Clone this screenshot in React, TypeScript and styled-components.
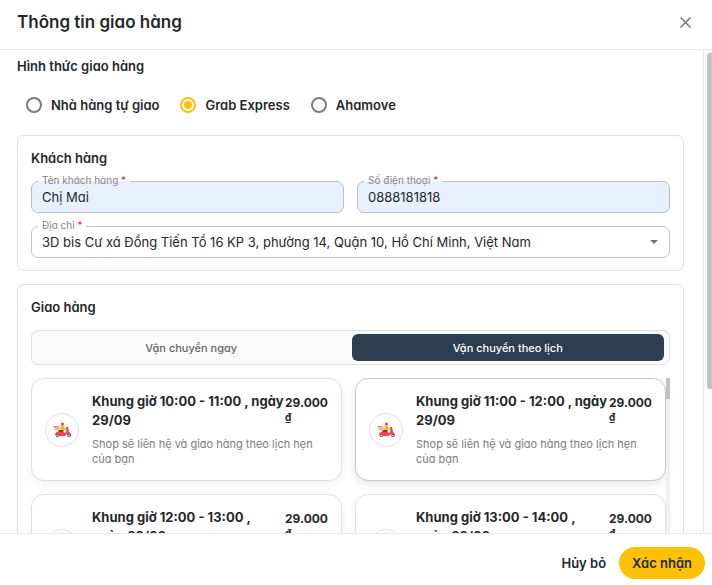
import React, { useState } from "react";
import styled, { createGlobalStyle } from "styled-components";

const GlobalStyle = createGlobalStyle`
  * { box-sizing: border-box; }
  body {
    margin: 0;
    background: #fff;
    color: #25282b;
    font-family: Inter, "Noto Sans", sans-serif;
    font-feature-settings: "cv11";
    font-size: 13px;
  }
  button, input, select { font: inherit; color: inherit; font-feature-settings: inherit; }
`;

const Dialog = styled.form`
  display: flex;
  flex-direction: column;
  height: 100vh;
`;

const Header = styled.header`
  display: flex;
  align-items: center;
  justify-content: space-between;
  padding: 11px 17px 15px;
  border-bottom: 1px solid #e8e8e8;
`;

const DialogTitle = styled.h1`
  margin: 0;
  font-size: 17px;
  line-height: 23px;
  font-weight: 600;
`;

const CloseButton = styled.button`
  display: flex;
  padding: 4px;
  border: 0;
  background: none;
  color: #757575;
`;

const Content = styled.div`
  display: flex;
  flex: 1;
  min-height: 0;
`;

const ScrollArea = styled.main`
  flex: 1;
  min-width: 0;
  overflow-y: auto;
  scrollbar-width: none;
  padding: 6px 19px 16px 17px;
`;

const PageRail = styled.div`
  width: 9px;
  padding: 3px 0 0 3px;
  border-left: 1px solid #e8e8e8;
  background: #fafafa;
`;

const PageThumb = styled.div`
  height: 70%;
  border-radius: 3px 0 0 3px;
  background: #c1c4c3;
`;

const SectionTitle = styled.h2`
  margin: 0;
  font-size: 13px;
  line-height: 20px;
  font-weight: 600;
`;

const Methods = styled.div`
  display: flex;
  gap: 21px;
  padding: 19px 9px 20px;
`;

const Method = styled.label`
  display: flex;
  align-items: center;
  gap: 9px;
  line-height: 20px;
  font-weight: 600;
`;

const Radio = styled.input`
  appearance: none;
  width: 16px;
  height: 16px;
  margin: 0;
  border: 2px solid #7b7b7b;
  border-radius: 50%;
  &:checked {
    padding: 2px;
    border-color: #ffc107;
    background: #ffc107 content-box;
  }
`;

const Panel = styled.section`
  margin-bottom: 13px;
  padding: 12px 13px;
  border: 1px solid #e0e0e0;
  border-radius: 7px;
`;

const FieldGrid = styled.div`
  display: grid;
  grid-template-columns: 1fr 1fr;
  gap: 13px;
  margin-top: 13px;
`;

const Field = styled.div<{ $wide?: boolean }>`
  position: relative;
  grid-column: ${(p) => (p.$wide ? "1 / -1" : "auto")};
`;

const FieldLabel = styled.label<{ $fill: string }>`
  position: absolute;
  z-index: 1;
  top: -8px;
  left: 7px;
  padding: 0 4px;
  font-size: 10px;
  line-height: 14px;
  color: #858585;
  background: linear-gradient(${(p) => p.$fill}, ${(p) => p.$fill}) 0 8px / 100% 1px no-repeat;
`;

const Required = styled.span`
  color: #f0283c;
`;

const TextInput = styled.input`
  display: block;
  width: 100%;
  height: 32px;
  padding: 0 10px;
  border: 1px solid #b9c0cf;
  border-radius: 7px;
  outline: 0;
  background: #e8f0fe;
`;

const Select = styled.select`
  appearance: none;
  display: block;
  width: 100%;
  height: 32px;
  padding: 0 32px 0 10px;
  border: 1px solid #c4c4c4;
  border-radius: 7px;
  outline: 0;
  background: #fff;
`;

const Caret = styled.span`
  position: absolute;
  top: 14px;
  right: 12px;
  border: 4px solid transparent;
  border-top-color: #757575;
  border-bottom: 0;
  pointer-events: none;
`;

const Tabs = styled.div`
  display: grid;
  grid-template-columns: 1fr 1fr;
  column-gap: 4px;
  margin: 13px 0;
  padding: 3px 5px 3px 3px;
  border: 1px solid #e0e0e0;
  border-radius: 7px;
  background: #fafafa;
`;

const Tab = styled.button<{ $active: boolean }>`
  height: 27px;
  padding: 0;
  border: 0;
  border-radius: 6px;
  font-size: 11px;
  font-weight: 500;
  color: ${(p) => (p.$active ? "#fff" : "#666")};
  background: ${(p) => (p.$active ? "#2c3e50" : "transparent")};
`;

const SlotArea = styled.div`
  display: flex;
`;

const SlotGrid = styled.div`
  flex: 1;
  display: grid;
  grid-template-columns: 1fr 1fr;
  gap: 13px;
`;

const SlotRail = styled.div`
  width: 4px;
  background: #f1f1f1;
`;

const SlotThumb = styled.div`
  height: 21px;
  background: #c1c1c1;
`;

const Slot = styled.button<{ $highlight: boolean }>`
  display: flex;
  align-items: center;
  gap: 13px;
  padding: 13px;
  border: 1px solid ${(p) => (p.$highlight ? "#c8c8c8" : "#e0e0e0")};
  border-radius: 13px;
  background: #fff;
  text-align: left;
  box-shadow: 0 3px 8px rgba(0, 0, 0, ${(p) => (p.$highlight ? 0.1 : 0.06)});
`;

const Avatar = styled.span`
  display: flex;
  flex: none;
  align-items: center;
  justify-content: center;
  width: 34px;
  height: 34px;
  border: 1px solid #e0e0e0;
  border-radius: 50%;
`;

const SlotText = styled.span`
  flex: 1;
  display: flex;
  flex-direction: column;
  gap: 7px;
`;

const SlotHead = styled.span`
  display: flex;
  justify-content: space-between;
`;

const SlotTitle = styled.span`
  flex: 1;
  line-height: 19px;
  font-weight: 700;
`;

const Price = styled.span`
  width: 43px;
  padding-top: 3px;
  font-size: 12px;
  line-height: 15px;
  font-weight: 700;
`;

const Currency = styled.span`
  display: block;
  font-size: 10px;
`;

const Note = styled.span`
  font-size: 11px;
  line-height: 15px;
  color: #7d7d7d;
`;

const Footer = styled.footer`
  display: flex;
  justify-content: flex-end;
  padding: 13px 7px 6px;
  border-top: 1px solid #e8e8e8;
`;

const Action = styled.button<{ $primary?: boolean }>`
  height: 32px;
  padding: 0 13px;
  border: 0;
  border-radius: 16px;
  font-weight: 600;
  line-height: 18px;
  background: ${(p) => (p.$primary ? "#ffc107" : "transparent")};
`;

const Scooter = () => (
  <svg width="20" height="16" viewBox="0 0 20 16" aria-hidden="true">
    <path d="M1 4h5l1.500 1H2z" fill="#8b8b8b" />
    <path d="M2 5l4-1 2.500 2.500-2 2H3z" fill="#ffb08a" />
    <path d="M9 3.500h2.500l1 2.500 2 .5v1.500l-3-.5-.5 2H8z" fill="#ffb511" />
    <circle cx="10.500" cy="2" r="1.500" fill="#f5334f" />
    <path d="M6.500 8h5v2.500h-5z" fill="#4a4d55" />
    <path d="M14 5h2l1 5 2 2v2h-3l-1-2-2 2H4l-1-2 2-2.500 1.500.5h5l1.500 1 1.500-1z" fill="#ff3d55" />
    <circle cx="5.500" cy="13.500" r="1.700" fill="#666" />
    <circle cx="5.500" cy="13.500" r="0.800" fill="#ddd" />
    <circle cx="17" cy="13.500" r="1.700" fill="#666" />
    <circle cx="17" cy="13.500" r="0.800" fill="#ddd" />
  </svg>
);

const methods = ["Nhà hàng tự giao", "Grab Express", "Ahamove"];
const tabs = ["Vận chuyển ngay", "Vận chuyển theo lịch"];
const slots = ["10:00 - 11:00", "11:00 - 12:00", "12:00 - 13:00", "13:00 - 14:00"];

export default function App() {
  const [method, setMethod] = useState(methods[1]);
  const [tab, setTab] = useState(tabs[1]);

  return (
    <>
      <GlobalStyle />
      <Dialog onSubmit={(e) => e.preventDefault()}>
        <Header>
          <DialogTitle>Thông tin giao hàng</DialogTitle>
          <CloseButton type="button" aria-label="Đóng">
            <svg width="11" height="11" viewBox="0 0 11 11" aria-hidden="true">
              <path d="M0.500 0.500l10 10M10.500 0.500l-10 10" stroke="currentColor" strokeWidth="1.500" />
            </svg>
          </CloseButton>
        </Header>
        <Content>
          <ScrollArea>
            <SectionTitle>Hình thức giao hàng</SectionTitle>
            <Methods>
              {methods.map((name) => (
                <Method key={name}>
                  <Radio type="radio" name="method" checked={method === name} onChange={() => setMethod(name)} />
                  {name}
                </Method>
              ))}
            </Methods>
            <Panel>
              <SectionTitle>Khách hàng</SectionTitle>
              <FieldGrid>
                <Field>
                  <FieldLabel htmlFor="name" $fill="#e8f0fe">Tên khách hàng <Required>*</Required></FieldLabel>
                  <TextInput id="name" defaultValue="Chị Mai" />
                </Field>
                <Field>
                  <FieldLabel htmlFor="phone" $fill="#e8f0fe">Số điện thoại <Required>*</Required></FieldLabel>
                  <TextInput id="phone" type="tel" defaultValue="0888181818" />
                </Field>
                <Field $wide>
                  <FieldLabel htmlFor="address" $fill="#fff">Địa chỉ <Required>*</Required></FieldLabel>
                  <Select id="address">
                    <option>3D bis Cư xá Đồng Tiến Tổ 16 KP 3, phường 14, Quận 10, Hồ Chí Minh, Việt Nam</option>
                  </Select>
                  <Caret />
                </Field>
              </FieldGrid>
            </Panel>
            <Panel>
              <SectionTitle>Giao hàng</SectionTitle>
              <Tabs role="tablist">
                {tabs.map((name) => (
                  <Tab key={name} type="button" role="tab" aria-selected={tab === name} $active={tab === name} onClick={() => setTab(name)}>
                    {name}
                  </Tab>
                ))}
              </Tabs>
              <SlotArea>
                <SlotGrid>
                  {slots.map((time, i) => (
                    <Slot key={time} type="button" $highlight={i === 1}>
                      <Avatar><Scooter /></Avatar>
                      <SlotText>
                        <SlotHead>
                          <SlotTitle>{`Khung giờ ${time} , ngày 29/09`}</SlotTitle>
                          <Price>29.000 <Currency>₫</Currency></Price>
                        </SlotHead>
                        <Note>Shop sẽ liên hệ và giao hàng theo lịch hẹn của bạn</Note>
                      </SlotText>
                    </Slot>
                  ))}
                </SlotGrid>
                <SlotRail><SlotThumb /></SlotRail>
              </SlotArea>
            </Panel>
          </ScrollArea>
          <PageRail><PageThumb /></PageRail>
        </Content>
        <Footer>
          <Action type="button">Hủy bỏ</Action>
          <Action type="submit" $primary>Xác nhận</Action>
        </Footer>
      </Dialog>
    </>
  );
}
